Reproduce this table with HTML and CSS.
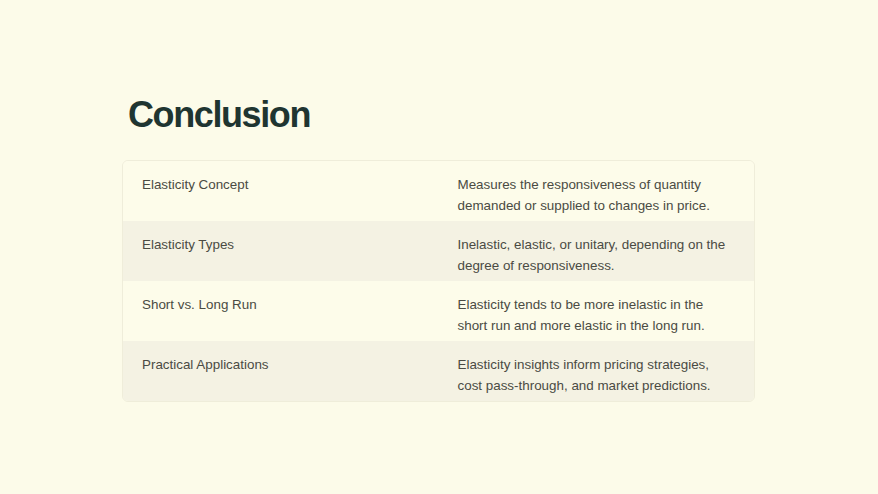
FILE: index.html
```html
<!DOCTYPE html>
<html>
<head>
<meta charset="utf-8">
<link rel="stylesheet" href="styles.css">
</head>
<body>
<main class="slide">
  <h1 class="title">Conclusion</h1>
  <div class="table">
    <div class="row">
      <div class="cell">Elasticity Concept</div>
      <div class="cell">Measures the responsiveness of quantity demanded or supplied to changes in price.</div>
    </div>
    <div class="row alt">
      <div class="cell">Elasticity Types</div>
      <div class="cell">Inelastic, elastic, or unitary, depending on the degree of responsiveness.</div>
    </div>
    <div class="row">
      <div class="cell">Short vs. Long Run</div>
      <div class="cell">Elasticity tends to be more inelastic in the short run and more elastic in the long run.</div>
    </div>
    <div class="row alt">
      <div class="cell">Practical Applications</div>
      <div class="cell">Elasticity insights inform pricing strategies, cost pass-through, and market predictions.</div>
    </div>
  </div>
</main>
</body>
</html>
```

FILE: styles.css
```css
html, body {
  margin: 0;
  padding: 0;
  background: #fcfbe9;
}
body {
  width: 878px;
  height: 494px;
  overflow: hidden;
  font-family: "Liberation Sans", Arial, sans-serif;
}
.slide {
  padding: 92px 123px 0 122px;
}
.title {
  margin: 0 0 22px 6px;
  font-size: 36px;
  line-height: 46px;
  font-weight: 700;
  letter-spacing: -1.4px;
  color: #1f3531;
}
.table {
  border: 1px solid #efedda;
  border-radius: 6px;
  overflow: hidden;
}
.row {
  display: grid;
  grid-template-columns: 1fr 1fr;
  height: 60px;
  background: #fdfcea;
}
.row.alt {
  background: #f4f2e3;
}
.cell {
  padding: 13px 20px 0 19px;
  font-size: 13.4px;
  line-height: 21px;
  color: #4a4b43;
}
```
